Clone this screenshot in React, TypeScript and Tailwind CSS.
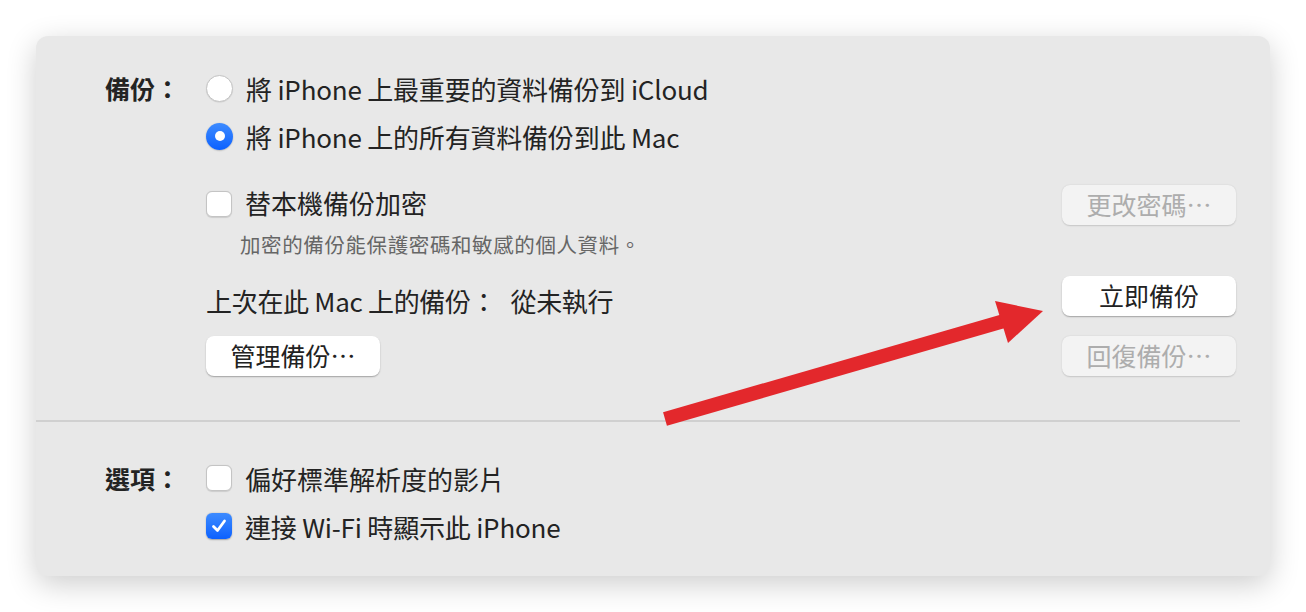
import React from "react";

const font = { fontFamily: "'Noto Sans CJK TC', 'Noto Sans', sans-serif" };

function Radio({ checked }: { checked?: boolean }) {
  if (checked) {
    return (
      <div className="w-[27px] h-[27px] rounded-full bg-gradient-to-b from-[#3d8bff] to-[#0a60ff] flex items-center justify-center shadow-[0_0.5px_1.5px_rgba(0,0,0,0.3)] shrink-0">
        <div className="w-[10px] h-[10px] rounded-full bg-white" />
      </div>
    );
  }
  return <div className="w-[27px] h-[27px] rounded-full bg-white border border-[#c4c4c4] shadow-[0_0.5px_1px_rgba(0,0,0,0.12)] shrink-0" />;
}

function Checkbox({ checked }: { checked?: boolean }) {
  if (checked) {
    return (
      <div className="w-[26px] h-[26px] rounded-[6px] bg-gradient-to-b from-[#3d8bff] to-[#0a60ff] flex items-center justify-center shadow-[0_0.5px_1.5px_rgba(0,0,0,0.3)] shrink-0">
        <svg width="18" height="18" viewBox="0 0 18 18" fill="none">
          <path d="M3.5 9.5 L7.5 13.5 L14.5 4" stroke="white" strokeWidth="2.8" strokeLinecap="round" strokeLinejoin="round" />
        </svg>
      </div>
    );
  }
  return <div className="w-[26px] h-[26px] rounded-[6px] bg-white border border-[#c4c4c4] shadow-[0_0.5px_1px_rgba(0,0,0,0.12)] shrink-0" />;
}

function Button({ label, disabled }: { label: string; disabled?: boolean }) {
  return (
    <div
      className={`h-[40px] w-[174px] rounded-[8px] flex items-center justify-center text-[25px] ${
        disabled
          ? "bg-[#f3f3f3] text-[#adadad] shadow-[0_0.5px_1.5px_rgba(0,0,0,0.15)]"
          : "bg-white text-[#222] shadow-[0_1px_1.5px_rgba(0,0,0,0.3)]"
      }`}
    >
      {label}
    </div>
  );
}

export default function App() {
  return (
    <div className="relative w-[1306px] h-[612px] bg-white overflow-hidden text-[#232323]" style={font}>
      <div className="absolute left-[36px] top-[36px] w-[1234px] h-[540px] rounded-[12px] bg-[#e8e8e8] shadow-[0_8px_30px_rgba(0,0,0,0.2)] flex flex-col">
        {/* BACKUP */}
        <div className="flex pt-[35px] pb-[44px] pr-[34px]">
          <div className="w-[144px] h-[34px] text-right text-[25px] font-bold leading-[34px]">備份：</div>
          <div className="flex-1 pl-[26px] flex flex-col">
            <div className="h-[34px] flex items-center gap-[13px] text-[26px]">
              <Radio />
              <span className="tracking-[-0.2px]">將 iPhone 上最重要的資料備份到 iCloud</span>
            </div>
            <div className="mt-[14px] h-[34px] flex items-center gap-[13px] text-[26px]">
              <Radio checked />
              <span className="tracking-[-0.2px]">將 iPhone 上的所有資料備份到此 Mac</span>
            </div>
            <div className="mt-[32px] h-[40px] flex items-center justify-between">
              <div className="flex items-center gap-[13px] text-[26px] -mt-[3px]">
                <Checkbox />
                <span className="pb-[2px]">替本機備份加密</span>
              </div>
              <Button label="更改密碼⋯" disabled />
            </div>
            <div className="mt-[5px] h-[28px] pl-[34px] text-[20.5px] tracking-[0.6px] leading-[28px] text-[#666]">加密的備份能保護密碼和敏感的個人資料。</div>
            <div className="mt-[18px] h-[40px] flex items-center justify-between">
              <span className="text-[26px] tracking-[-0.3px] pt-[8px]">
                上次在此 Mac 上的備份：<span className="ml-[14px]">從未執行</span>
              </span>
              <Button label="立即備份" />
            </div>
            <div className="mt-[20px] h-[40px] flex items-center justify-between">
              <Button label="管理備份⋯" />
              <Button label="回復備份⋯" disabled />
            </div>
          </div>
        </div>

        <div className="h-[2px] bg-[#d0d0d0] mr-[30px]" />

        {/* OPTIONS */}
        <div className="flex pt-[39px] pr-[34px]">
          <div className="w-[144px] h-[34px] text-right text-[25px] font-bold leading-[34px]">選項：</div>
          <div className="flex-1 pl-[26px] flex flex-col">
            <div className="h-[34px] flex items-center gap-[13px] text-[26px]">
              <Checkbox />
              <span>偏好標準解析度的影片</span>
            </div>
            <div className="mt-[14px] h-[34px] flex items-center gap-[13px] text-[26px]">
              <Checkbox checked />
              <span className="tracking-[-0.2px]">連接 Wi-Fi 時顯示此 iPhone</span>
            </div>
          </div>
        </div>
      </div>

      {/* annotation arrow */}
      <svg className="absolute left-0 top-0 pointer-events-none" width="1306" height="612">
        <line x1="665" y1="419" x2="1004" y2="321" stroke="#e3282c" strokeWidth="14" />
        <polygon points="1043,311 995,301 1008,343" fill="#e3282c" />
      </svg>
    </div>
  );
}
